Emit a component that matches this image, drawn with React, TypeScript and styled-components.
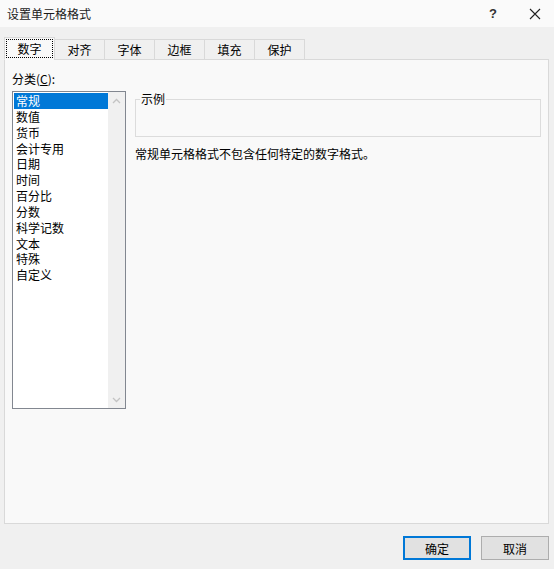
import styled, { createGlobalStyle } from "styled-components";
import { useState } from "react";

const GlobalStyle = createGlobalStyle`
  html, body {
    margin: 0;
    padding: 0;
    background: #f0f0f0;
  }
  body {
    font-family: "Microsoft YaHei", "Noto Sans CJK SC", "Liberation Sans", sans-serif;
    font-size: 12px;
    color: #000;
  }
`;

const categories = [
  "常规",
  "数值",
  "货币",
  "会计专用",
  "日期",
  "时间",
  "百分比",
  "分数",
  "科学记数",
  "文本",
  "特殊",
  "自定义",
];

const tabs = ["数字", "对齐", "字体", "边框", "填充", "保护"];

export default function App() {
  const [selected, setSelected] = useState(0);
  const [tab, setTab] = useState(0);

  return (
    <>
      <GlobalStyle />
      <Dialog>
        <TitleBar>
          <Title>设置单元格格式</Title>
          <TitleButtons>
            <HelpButton>?</HelpButton>
            <CloseButton>
              <svg width="12" height="12" viewBox="0 0 12 12">
                <path d="M1 1 L11 11 M11 1 L1 11" stroke="#222" strokeWidth="1.1" fill="none" />
              </svg>
            </CloseButton>
          </TitleButtons>
        </TitleBar>

        <Body>
          <TabStrip>
            {tabs.map((t, i) => (
              <Tab key={t} $active={i === tab} onClick={() => setTab(i)}>
                <TabLabel $active={i === tab}>{t}</TabLabel>
              </Tab>
            ))}
          </TabStrip>

          <Panel>
            <LeftColumn>
              <Label>
                分类(<u>C</u>):
              </Label>
              <ListBox>
                <Items>
                  {categories.map((c, i) => (
                    <Item key={c} $selected={i === selected} onClick={() => setSelected(i)}>
                      {c}
                    </Item>
                  ))}
                </Items>
                <ScrollBar>
                  <Arrow>
                    <svg width="9" height="6" viewBox="0 0 9 6">
                      <path d="M1 5 L4.5 1.5 L8 5" stroke="#c3c3c3" strokeWidth="1.3" fill="none" />
                    </svg>
                  </Arrow>
                  <Arrow>
                    <svg width="9" height="6" viewBox="0 0 9 6">
                      <path d="M1 1 L4.5 4.5 L8 1" stroke="#c3c3c3" strokeWidth="1.3" fill="none" />
                    </svg>
                  </Arrow>
                </ScrollBar>
              </ListBox>
            </LeftColumn>

            <RightColumn>
              <Sample>
                <Legend>示例</Legend>
              </Sample>
              <Description>常规单元格格式不包含任何特定的数字格式。</Description>
            </RightColumn>
          </Panel>

          <Footer>
            <Button $primary>确定</Button>
            <Button>取消</Button>
          </Footer>
        </Body>
      </Dialog>
    </>
  );
}

const Dialog = styled.div`
  width: 554px;
  height: 569px;
  display: flex;
  flex-direction: column;
  background: #f0f0f0;
  overflow: hidden;
`;

const TitleBar = styled.div`
  height: 27px;
  flex: 0 0 27px;
  background: #fafafa;
  display: flex;
  align-items: center;
  justify-content: space-between;
  padding-left: 7px;
`;

const Title = styled.span`
  font-size: 12px;
  color: #1a1a1a;
`;

const TitleButtons = styled.div`
  display: flex;
  align-items: center;
  height: 100%;
`;

const HelpButton = styled.div`
  width: 46px;
  text-align: center;
  font-family: "Liberation Sans", sans-serif;
  font-weight: bold;
  font-size: 13px;
  color: #333;
`;

const CloseButton = styled.div`
  width: 38px;
  display: flex;
  justify-content: center;
  align-items: center;
`;

const Body = styled.div`
  flex: 1;
  display: flex;
  flex-direction: column;
  padding: 10px 5px 0 4px;
`;

const TabStrip = styled.div`
  display: flex;
  align-items: flex-end;
  height: 23px;
  position: relative;
  z-index: 1;
  margin-bottom: -1px;
`;

const Tab = styled.div<{ $active: boolean }>`
  width: 51px;
  height: ${(p) => (p.$active ? "23px" : "21px")};
  display: flex;
  align-items: center;
  justify-content: center;
  background: ${(p) => (p.$active ? "#f9f9f9" : "#f0f0f0")};
  border: 1px solid #d9d9d9;
  border-bottom: ${(p) => (p.$active ? "1px solid #f9f9f9" : "1px solid #d9d9d9")};
  margin-left: -1px;
  box-sizing: border-box;
  cursor: default;
  &:first-child {
    margin-left: 0;
  }
`;

const TabLabel = styled.span<{ $active: boolean }>`
  line-height: 15px;
  text-align: center;
  box-sizing: border-box;
  ${(p) =>
    p.$active
      ? "outline: 1px dotted #000; width: 100%; margin: -1px 2px 0; padding: 1px 0;"
      : ""}
`;

const Panel = styled.div`
  height: 465px;
  flex: 0 0 465px;
  background: #f9f9f9;
  border: 1px solid #d9d9d9;
  box-sizing: border-box;
  display: flex;
  padding: 12px 7px 0 7px;
  gap: 9px;
`;

const LeftColumn = styled.div`
  width: 114px;
  display: flex;
  flex-direction: column;
`;

const Label = styled.div`
  height: 19px;
  line-height: 14px;
  u {
    text-decoration: underline;
  }
`;

const ListBox = styled.div`
  height: 318px;
  border: 1px solid #828790;
  background: #fff;
  display: flex;
  box-sizing: border-box;
`;

const Items = styled.div`
  flex: 1;
  padding: 1px 0 0 1px;
`;

const Item = styled.div<{ $selected: boolean }>`
  height: 15.85px;
  line-height: 15.85px;
  padding-left: 2px;
  background: ${(p) => (p.$selected ? "#0078d7" : "transparent")};
  color: ${(p) => (p.$selected ? "#fff" : "#000")};
  cursor: default;
`;

const ScrollBar = styled.div`
  width: 17px;
  background: #f0f0f0;
  display: flex;
  flex-direction: column;
  justify-content: space-between;
`;

const Arrow = styled.div`
  height: 17px;
  display: flex;
  align-items: center;
  justify-content: center;
`;

const RightColumn = styled.div`
  flex: 1;
  display: flex;
  flex-direction: column;
  padding-top: 27px;
`;

const Sample = styled.div`
  height: 38px;
  border: 1px solid #dcdcdc;
  box-sizing: border-box;
  position: relative;
`;

const Legend = styled.span`
  position: absolute;
  left: 4px;
  top: -9px;
  padding: 0 1px;
  background: #f9f9f9;
  line-height: 15px;
`;

const Description = styled.div`
  margin-top: 9px;
  line-height: 15px;
`;

const Footer = styled.div`
  display: flex;
  justify-content: flex-end;
  gap: 10px;
  padding-top: 12px;
`;

const Button = styled.div<{ $primary?: boolean }>`
  width: 68px;
  height: 24px;
  box-sizing: border-box;
  display: flex;
  align-items: center;
  justify-content: center;
  background: #e1e1e1;
  border: ${(p) => (p.$primary ? "2px solid #0078d7" : "1px solid #adadad")};
  cursor: default;
`;
